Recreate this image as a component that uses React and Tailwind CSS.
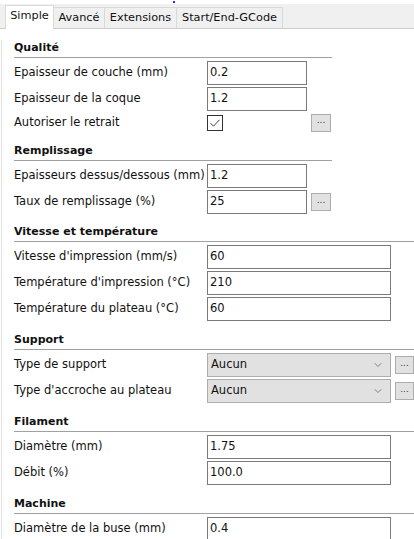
import { ChevronDown } from "lucide-react";

const font = { fontFamily: '"DejaVu Sans", Tahoma, sans-serif' };

const Section = ({ title, short, mt, children }) => (
    <div className={mt}>
        <div
            className={`border-b border-[#a0a0a0] pb-[2px] text-[11px] font-bold leading-[15px] text-[#111] ${
                short ? "w-[318px]" : ""
            }`}
        >
            {title}
        </div>
        <div className="mt-[3px] flex flex-col gap-[2px]">{children}</div>
    </div>
);

const Label = ({ children }) => (
    <div className="w-[193px] shrink-0 whitespace-nowrap text-[11.5px] text-[#111]">
        {children}
    </div>
);

const Dots = ({ wide }) => (
    <div
        className={`ml-[4px] flex h-[18px] items-center justify-center border border-[#adadad] bg-[#e1e1e1] text-[9px] leading-none text-[#333] ${
            wide ? "w-[19px]" : "w-[20px]"
        }`}
    >
        <span className="-mt-[4px]">...</span>
    </div>
);

const InputRow = ({ label, value, wide, dots }) => (
    <div className="flex h-[24px] items-center">
        <Label>{label}</Label>
        <div
            className={`flex h-[24px] items-center border border-[#7a7a7a] bg-white pl-[2px] text-[11.5px] text-[#111] ${
                wide ? "w-[184px]" : "w-[100px]"
            }`}
        >
            {value}
        </div>
        {dots && <Dots />}
    </div>
);

const SelectRow = ({ label, value }) => (
    <div className="flex h-[24px] items-center">
        <Label>{label}</Label>
        <div className="flex h-[24px] w-[184px] items-center justify-between border border-[#adadad] bg-[#e1e1e1] pl-[3px] pr-[6px] text-[11.5px] text-[#111]">
            <span>{value}</span>
            <ChevronDown size={12} strokeWidth={1.2} color="#444" />
        </div>
        <Dots wide />
    </div>
);

const tabs = [
    { name: "Simple", w: "w-[49px]" },
    { name: "Avancé", w: "w-[51px]" },
    { name: "Extensions", w: "w-[72px]" },
    { name: "Start/End-GCode", w: "w-[106px]" },
];

export default function App() {
    return (
        <div
            className="relative h-[539px] w-[414px] overflow-hidden bg-white"
            style={font}
        >
            <div className="absolute left-[173px] top-[1px] h-[2px] w-[2px] bg-[#2a2aff]" />
            <div className="pt-[4px]">
                <div className="flex h-[25px] items-end border-b border-[#cccccc] bg-[#f0f0f0] pl-[5px]">
                    {tabs.map((t, i) =>
                        i === 0 ? (
                            <div
                                key={t.name}
                                className={`${t.w} -mb-px flex h-[24px] items-center justify-center border border-b-0 border-[#d9d9d9] bg-white pb-[2px] text-[11.3px] text-[#111]`}
                            >
                                {t.name}
                            </div>
                        ) : (
                            <div
                                key={t.name}
                                className={`${t.w} flex h-[21px] items-center justify-center border border-b-0 border-l-0 border-[#d9d9d9] bg-[#f0f0f0] text-[11.3px] text-[#111]`}
                            >
                                {t.name}
                            </div>
                        )
                    )}
                </div>
            </div>
            <div className="ml-px h-full border-l border-[#e3e3e3] pl-[12px]">
                <Section title="Qualité" short mt="mt-[11px]">
                    <InputRow label="Epaisseur de couche (mm)" value="0.2" />
                    <InputRow label="Epaisseur de la coque" value="1.2" />
                    <div className="flex h-[19px] items-center">
                        <Label>Autoriser le retrait</Label>
                        <div className="flex h-[16px] w-[16px] items-center justify-center border border-[#333] bg-white">
                            <svg width="12" height="10" viewBox="0 0 12 10">
                                <path
                                    d="M1.5 5.2 L4.5 8.2 L10.5 1.8"
                                    fill="none"
                                    stroke="#444"
                                    strokeWidth="1"
                                />
                            </svg>
                        </div>
                        <div className="w-[84px]" />
                        <Dots />
                    </div>
                </Section>
                <Section title="Remplissage" short mt="mt-[11px]">
                    <InputRow label="Epaisseurs dessus/dessous (mm)" value="1.2" />
                    <InputRow label="Taux de remplissage (%)" value="25" dots />
                </Section>
                <Section title="Vitesse et température" mt="mt-[10px]">
                    <InputRow label="Vitesse d'impression (mm/s)" value="60" wide />
                    <InputRow label="Température d'impression (°C)" value="210" wide />
                    <InputRow label="Température du plateau (°C)" value="60" wide />
                </Section>
                <Section title="Support" mt="mt-[11px]">
                    <SelectRow label="Type de support" value="Aucun" />
                    <SelectRow label="Type d'accroche au plateau" value="Aucun" />
                </Section>
                <Section title="Filament" mt="mt-[11px]">
                    <InputRow label="Diamètre (mm)" value="1.75" wide />
                    <InputRow label="Débit (%)" value="100.0" wide />
                </Section>
                <Section title="Machine" mt="mt-[11px]">
                    <InputRow label="Diamètre de la buse (mm)" value="0.4" wide />
                </Section>
            </div>
        </div>
    );
}
